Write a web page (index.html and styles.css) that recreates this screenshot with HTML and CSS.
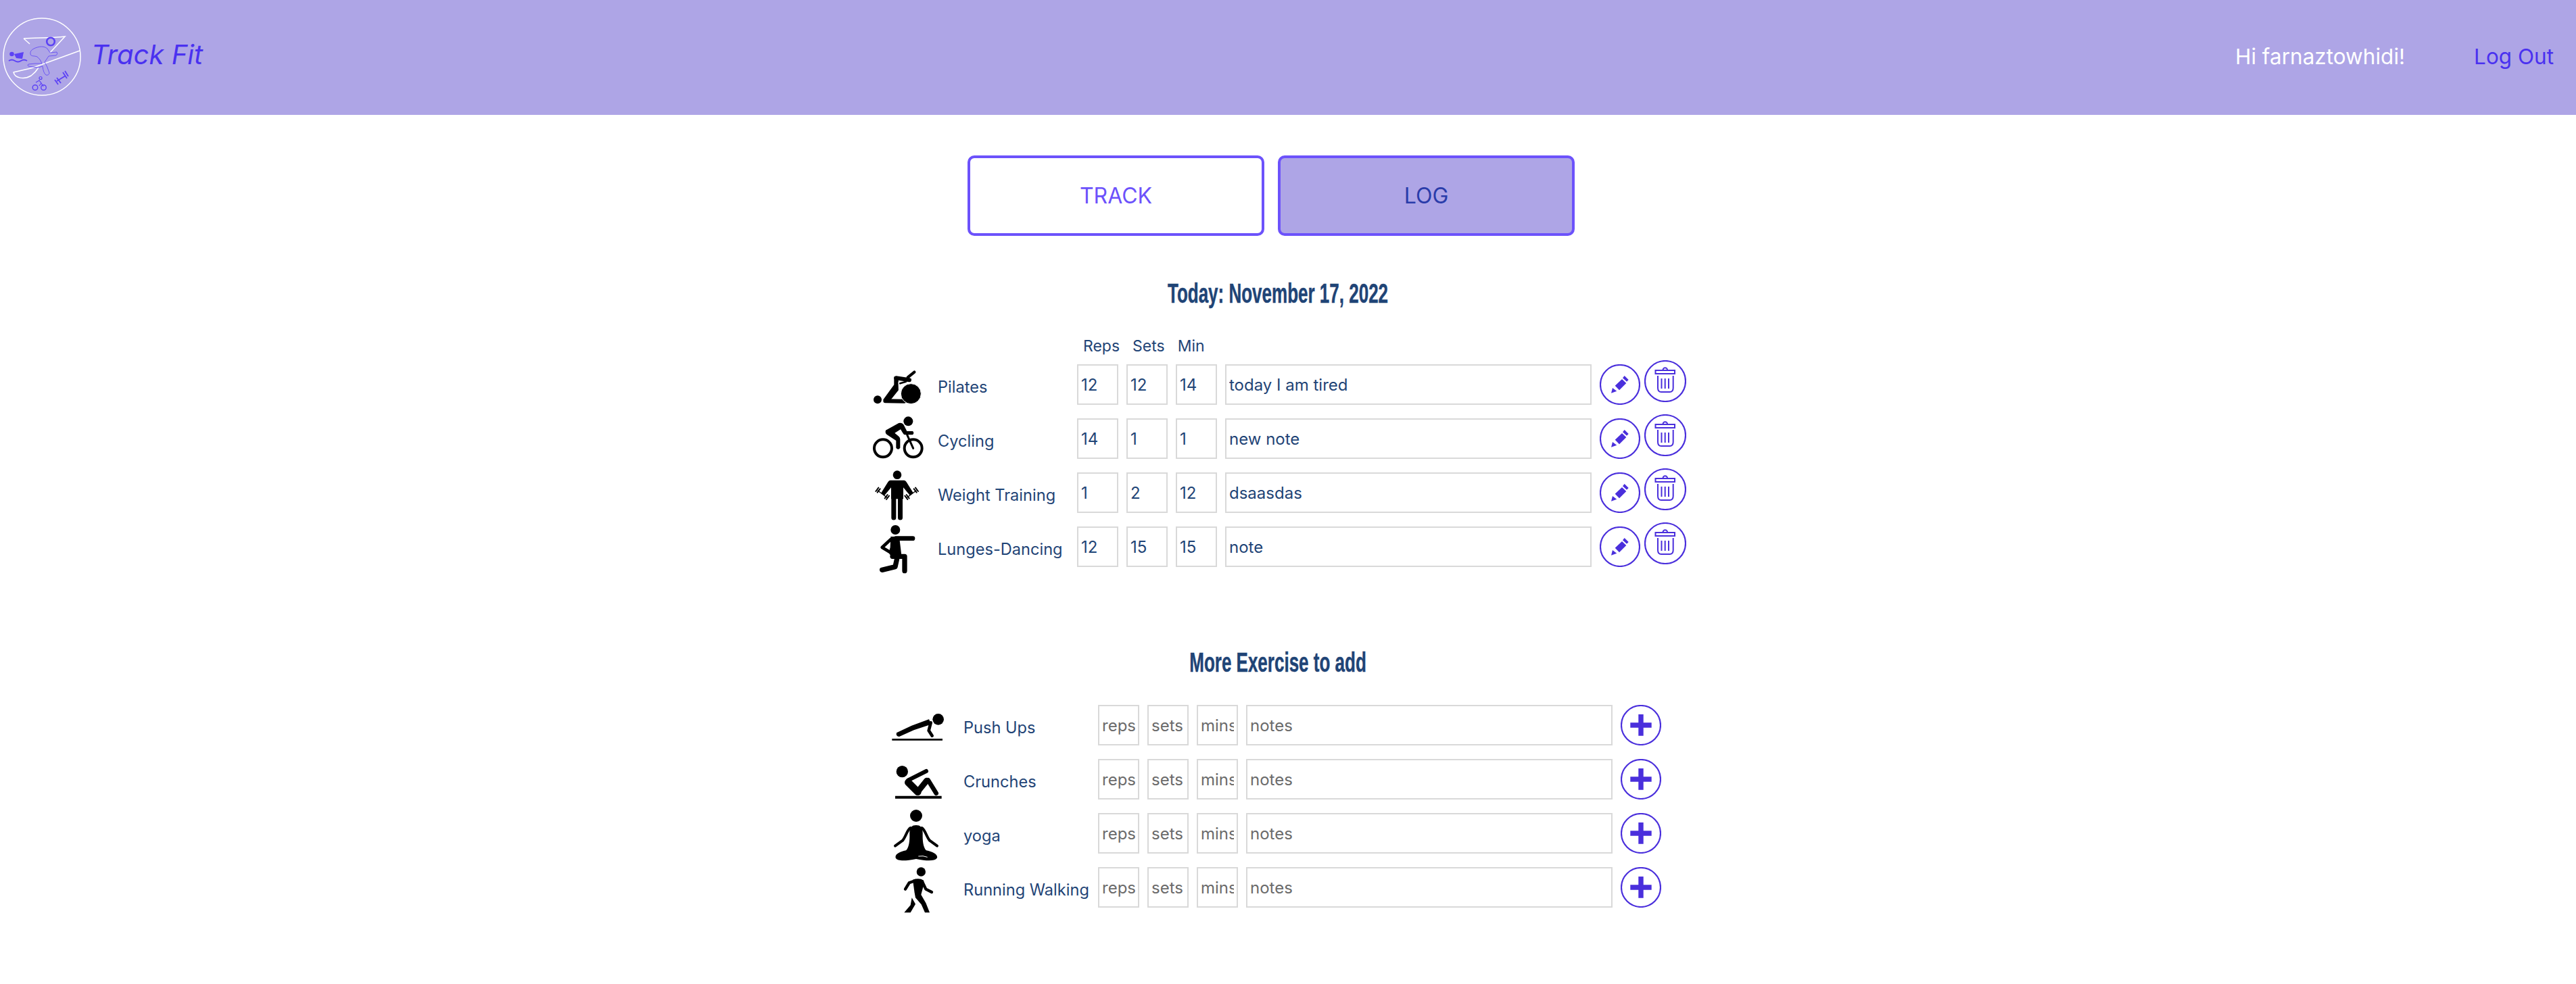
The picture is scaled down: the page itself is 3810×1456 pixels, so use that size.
FILE: index.html
```html
<!DOCTYPE html>
<html lang="en">
<head>
    <meta charset="UTF-8">
    <meta name="viewport" content="width=device-width, initial-scale=1.0">
    <title>Track Fit</title>
    <link rel="stylesheet" href="styles.css">
</head>
<body>
    <nav class="navbar">
        <div class="brand">
            <svg class="logo" viewBox="0 0 125 170">
                <circle cx="62" cy="84" r="57" fill="none" stroke="#fff" stroke-width="1.5"/>
                <path d="M35 57 C50 55 75 57 96 54 L74 78 M35 57 L44 65 M118 75 L52 99 C40 103 25 105 20 107 C22 116 36 118 46 112 C50 109 54 105 57 100" fill="none" stroke="#fff" stroke-width="1.5"/>
                <circle cx="75" cy="61.5" r="5.8" fill="none" stroke="#5c42f5" stroke-width="2.6"/>
                <path d="M50 72 C58 68 66 68 70 72 L74 78 L84 77 Q86 80 83 82 L72 83 L66 92 Q70 98 73 108 Q72 112 68 111 Q64 108 63 98 L56 100 L42 98 Q40 96 42 95 L52 94 L62 94 L59 88 L55 84 C50 82 46 84 45 80 Q44 75 50 72 Z" fill="none" stroke="#5c42f5" stroke-width="0.8"/>
                <circle cx="17.5" cy="80" r="3.3" fill="#5c42f5"/>
                <path d="M21 80 L35 77 L33 87 L24 86 Z" fill="#5c42f5"/>
                <path d="M13 90 q4.5 -3 9 0 t9 0 t9 0" fill="none" stroke="#5c42f5" stroke-width="1.9"/>
                <circle cx="52" cy="129.5" r="3.8" fill="none" stroke="#5c42f5" stroke-width="1.4"/>
                <circle cx="64.5" cy="129.5" r="3.8" fill="none" stroke="#5c42f5" stroke-width="1.4"/>
                <circle cx="60" cy="115.5" r="2" fill="none" stroke="#5c42f5" stroke-width="1.2"/>
                <path d="M53 122 L58 119 L61 123 L58 127 M61 123 L64 128" fill="none" stroke="#5c42f5" stroke-width="1.2"/>
                <path d="M84 120 L97 112 M81 118 L86 125 M84 115 L90 123 M93 107 L99 116 M96 105 L101 113" fill="none" stroke="#5c42f5" stroke-width="1.8"/>
            </svg>
            <span class="brand-name">Track Fit</span>
        </div>
        <div class="nav-links">
            <span class="greeting">Hi farnaztowhidi!</span>
            <a class="logout" href="#">Log Out</a>
        </div>
    </nav>

    <main>
        <div class="tabs">
            <button class="tab">TRACK</button>
            <button class="tab active">LOG</button>
        </div>

        <h2 class="title today">Today: November 17, 2022</h2>

        <div class="log-list">
            <div class="col-heads">
                <span>Reps</span>
                <span>Sets</span>
                <span>Min</span>
            </div>

            <div class="row">
                <svg class="ex-icon" viewBox="90 162 240 240">
                    <circle cx="114" cy="334" r="18"/>
                    <path class="limb" stroke-width="18" d="M148 340 L232 341"/>
                    <path d="M138 335 L187 268 L187 232 L206 240 L208 290 L172 335 Z"/>
                    <path class="limb" stroke-width="18" d="M196 238 L255 247"/>
                    <path class="limb" stroke-width="13" d="M248 235 L277 212"/>
                    <circle class="ball" cx="262" cy="308" r="45"/>
                    <path class="limb" stroke-width="8" d="M214 262 L240 254"/>
                    <path class="slit" d="M207 255 L208 292 M218 285 L240 262"/>
                </svg>
                <span class="name">Pilates</span>
                <input class="small" value="12">
                <input class="small" value="12">
                <input class="small" value="14">
                <input class="note" value="today I am tired">
                <button class="round-btn"><svg viewBox="0 0 60 60"><circle class="ring" cx="30" cy="30" r="29"/><path class="solid" d="M17 42.7 L19 35 L25.3 39.7 Z M22.7 31.7 L33 22 L39.3 28 L29 38.3 Z M34 20.3 L36.7 17 L42.7 23 L40 25.7 Z"/></svg></button>
                <button class="round-btn trash"><svg viewBox="0 0 62 62"><circle class="ring" cx="31" cy="31" r="30"/><path class="thin" d="M27.5 14.5 a3.3 3.3 0 0 1 6.6 0 M16.5 15 H45 V20 H16.5 Z M20 23 V41 Q20 47 25 47 H37.5 Q42.7 47 42.7 41 V23 M25.5 27 V42 M30.7 27 V42 M36 27 V42"/></svg></button>
            </div>

            <div class="row">
                <svg class="ex-icon" viewBox="90 402 240 240">
                    <circle cx="250" cy="430" r="21"/>
                    <circle class="wheel" cx="138" cy="550" r="39"/>
                    <circle class="wheel" cx="272" cy="550" r="39"/>
                    <path d="M150 470 L208 438 Q225 435 232 450 L244 474 H270 Q278 482 270 490 H236 Q230 490 226 482 L216 466 L190 482 L208 497 Q214 502 214 510 V548 Q205 560 196 548 V516 L156 490 Q146 482 150 470 Z"/>
                    <path class="limb" stroke-width="9" d="M245 490 L272 550"/>
                </svg>
                <span class="name">Cycling</span>
                <input class="small" value="14">
                <input class="small" value="1">
                <input class="small" value="1">
                <input class="note" value="new note">
                <button class="round-btn"><svg viewBox="0 0 60 60"><circle class="ring" cx="30" cy="30" r="29"/><path class="solid" d="M17 42.7 L19 35 L25.3 39.7 Z M22.7 31.7 L33 22 L39.3 28 L29 38.3 Z M34 20.3 L36.7 17 L42.7 23 L40 25.7 Z"/></svg></button>
                <button class="round-btn trash"><svg viewBox="0 0 62 62"><circle class="ring" cx="31" cy="31" r="30"/><path class="thin" d="M27.5 14.5 a3.3 3.3 0 0 1 6.6 0 M16.5 15 H45 V20 H16.5 Z M20 23 V41 Q20 47 25 47 H37.5 Q42.7 47 42.7 41 V23 M25.5 27 V42 M30.7 27 V42 M36 27 V42"/></svg></button>
            </div>

            <div class="row">
                <svg class="ex-icon" viewBox="90 642 240 240">
                    <circle cx="201" cy="668" r="19"/>
                    <path d="M170 692 H232 Q238 693 242 700 L272 748 L258 760 L228 724 V775 H174 V724 L144 760 L130 748 L160 700 Q164 693 170 692 Z"/>
                    <path class="limb" stroke-width="21" d="M185.500 765 V858 M214.500 765 V858"/>
                    <path class="limb" stroke-width="4" d="M115 738 L155 768 M285 738 L245 768"/>
                    <path class="limb" stroke-width="6" d="M106 741 L118 725 M113 746 L125 730 M146 772 L158 756 M153 777 L165 761 M294 741 L282 725 M287 746 L275 730 M254 772 L242 756 M247 777 L235 761"/>
                </svg>
                <span class="name">Weight Training</span>
                <input class="small" value="1">
                <input class="small" value="2">
                <input class="small" value="12">
                <input class="note" value="dsaasdas">
                <button class="round-btn"><svg viewBox="0 0 60 60"><circle class="ring" cx="30" cy="30" r="29"/><path class="solid" d="M17 42.7 L19 35 L25.3 39.7 Z M22.7 31.7 L33 22 L39.3 28 L29 38.3 Z M34 20.3 L36.7 17 L42.7 23 L40 25.7 Z"/></svg></button>
                <button class="round-btn trash"><svg viewBox="0 0 62 62"><circle class="ring" cx="31" cy="31" r="30"/><path class="thin" d="M27.5 14.5 a3.3 3.3 0 0 1 6.6 0 M16.5 15 H45 V20 H16.5 Z M20 23 V41 Q20 47 25 47 H37.5 Q42.7 47 42.7 41 V23 M25.5 27 V42 M30.7 27 V42 M36 27 V42"/></svg></button>
            </div>

            <div class="row">
                <svg class="ex-icon" viewBox="90 882 240 240">
                    <circle cx="193" cy="912" r="21"/>
                    <path class="limb" stroke-width="20" d="M195 950 H270"/>
                    <path d="M172 942 H210 L220 1025 H172 Q160 1020 170 990 Z"/>
                    <path class="limb" stroke-width="14" d="M172 955 L134 990 L175 1015"/>
                    <path class="limb" stroke-width="22" d="M180 1030 H234 V1094"/>
                    <path class="limb" stroke-width="22" d="M200 1040 L192 1076 L134 1090"/>
                </svg>
                <span class="name">Lunges-Dancing</span>
                <input class="small" value="12">
                <input class="small" value="15">
                <input class="small" value="15">
                <input class="note" value="note">
                <button class="round-btn"><svg viewBox="0 0 60 60"><circle class="ring" cx="30" cy="30" r="29"/><path class="solid" d="M17 42.7 L19 35 L25.3 39.7 Z M22.7 31.7 L33 22 L39.3 28 L29 38.3 Z M34 20.3 L36.7 17 L42.7 23 L40 25.7 Z"/></svg></button>
                <button class="round-btn trash"><svg viewBox="0 0 62 62"><circle class="ring" cx="31" cy="31" r="30"/><path class="thin" d="M27.5 14.5 a3.3 3.3 0 0 1 6.6 0 M16.5 15 H45 V20 H16.5 Z M20 23 V41 Q20 47 25 47 H37.5 Q42.7 47 42.7 41 V23 M25.5 27 V42 M30.7 27 V42 M36 27 V42"/></svg></button>
            </div>
        </div>

        <h2 class="title more">More Exercise to add</h2>

        <div class="add-list">
            <div class="row">
                <svg class="ex-icon" viewBox="120 51 240 240">
                    <circle cx="323" cy="130" r="25"/>
                    <path d="M138 190 L205 158 L282 130 L292 152 L215 178 L150 207 Q134 206 138 190 Z"/>
                    <path class="limb" stroke-width="14" d="M290 145 L281 180 L296 203"/>
                    <path class="ground" stroke-width="8" d="M118 220 H342"/>
                </svg>
                <span class="name">Push Ups</span>
                <input class="small" placeholder="reps">
                <input class="small" placeholder="sets">
                <input class="small" placeholder="mins">
                <input class="note" placeholder="notes">
                <button class="round-btn"><svg viewBox="0 0 60 60"><circle class="ring" cx="30" cy="30" r="29"/><path class="solid" d="M26.3 14 H33.7 V26.3 H45.7 V33.7 H33.7 V45.7 H26.3 V33.7 H14.3 V26.3 H26.3 Z"/></svg></button>
            </div>

            <div class="row">
                <svg class="ex-icon" viewBox="120 291 240 240">
                    <circle cx="163" cy="362" r="26"/>
                    <path class="limb" stroke-width="18" d="M190 400 L270 360"/>
                    <path class="limb" stroke-width="32" d="M190 410 L232 452"/>
                    <path class="limb" stroke-width="26" d="M232 452 L272 402"/>
                    <path class="limb" stroke-width="20" d="M278 400 L314 458"/>
                    <path class="ground" stroke-width="12" d="M132 476 H338"/>
                </svg>
                <span class="name">Crunches</span>
                <input class="small" placeholder="reps">
                <input class="small" placeholder="sets">
                <input class="small" placeholder="mins">
                <input class="note" placeholder="notes">
                <button class="round-btn"><svg viewBox="0 0 60 60"><circle class="ring" cx="30" cy="30" r="29"/><path class="solid" d="M26.3 14 H33.7 V26.3 H45.7 V33.7 H33.7 V45.7 H26.3 V33.7 H14.3 V26.3 H26.3 Z"/></svg></button>
            </div>

            <div class="row">
                <svg class="ex-icon" viewBox="120 531 240 240">
                    <circle cx="225" cy="558" r="27"/>
                    <path d="M225 600 C205 600 195 610 196 640 C197 675 192 700 180 712 C150 718 130 730 134 745 C140 760 175 760 225 750 C275 760 310 760 318 745 C322 730 300 718 270 712 C258 700 253 675 254 640 C255 610 245 600 225 600 Z"/>
                    <path class="limb" stroke-width="12" d="M200 612 C185 620 180 650 165 668 L132 692 M250 612 C265 620 270 650 285 668 L318 692"/>
                    <path class="slit" d="M235 738 Q255 734 275 742"/>
                </svg>
                <span class="name">yoga</span>
                <input class="small" placeholder="reps">
                <input class="small" placeholder="sets">
                <input class="small" placeholder="mins">
                <input class="note" placeholder="notes">
                <button class="round-btn"><svg viewBox="0 0 60 60"><circle class="ring" cx="30" cy="30" r="29"/><path class="solid" d="M26.3 14 H33.7 V26.3 H45.7 V33.7 H33.7 V45.7 H26.3 V33.7 H14.3 V26.3 H26.3 Z"/></svg></button>
            </div>

            <div class="row">
                <svg class="ex-icon" viewBox="120 771 240 240">
                    <circle cx="247" cy="807" r="20"/>
                    <path d="M210 842 Q240 832 258 845 L260 860 L245 915 L218 900 Z"/>
                    <path class="limb" stroke-width="13" d="M222 846 L194 856 L177 884 M252 850 L268 884 L294 897"/>
                    <path d="M218 900 L245 905 L268 945 L285 988 H264 L248 952 L222 922 Z"/>
                    <path d="M206 922 L222 950 L200 988 H172 L200 955 Z"/>
                </svg>
                <span class="name">Running Walking</span>
                <input class="small" placeholder="reps">
                <input class="small" placeholder="sets">
                <input class="small" placeholder="mins">
                <input class="note" placeholder="notes">
                <button class="round-btn"><svg viewBox="0 0 60 60"><circle class="ring" cx="30" cy="30" r="29"/><path class="solid" d="M26.3 14 H33.7 V26.3 H45.7 V33.7 H33.7 V45.7 H26.3 V33.7 H14.3 V26.3 H26.3 Z"/></svg></button>
            </div>
        </div>
    </main>
</body>
</html>
```

FILE: styles.css
```css
* {
    box-sizing: border-box;
}
body {
    margin: 0;
    background: white;
    font-family: Inter, "Noto Sans", sans-serif;
    color: #1f4476;
}
.navbar {
    height: 170px;
    background: #aea5e6;
    display: flex;
    justify-content: space-between;
    align-items: center;
    padding-right: 33px;
}
.brand {
    display: flex;
    align-items: center;
}
.logo {
    width: 125px;
    height: 170px;
    flex-shrink: 0;
}
.brand-name {
    margin-left: 10px;
    padding-bottom: 10px;
    font-size: 40px;
    font-style: italic;
    color: #4a31f0;
}
.nav-links {
    display: flex;
    align-items: center;
    gap: 102px;
    padding-bottom: 3px;
    font-size: 31.5px;
}
.greeting {
    color: white;
}
.logout {
    color: #4a31f0;
    text-decoration: none;
}
.tabs {
    display: flex;
    justify-content: center;
    gap: 20px;
    margin-top: 60px;
    padding-right: 50px;
}
.tab {
    width: 439px;
    height: 119px;
    border: 4px solid #6c52fb;
    border-radius: 10px;
    background: white;
    color: #6c52fb;
    font-family: inherit;
    font-size: 32px;
    cursor: pointer;
}
.tab.active {
    background: #aea5e6;
    color: #2a3caa;
}
.title {
    margin: 0 30px 0 0;
    text-align: center;
    font-family: "Liberation Sans", sans-serif;
    font-size: 40px;
    font-weight: bold;
    line-height: 44px;
    color: #1f4476;
    transform: scaleX(0.65);
    -webkit-text-stroke: 0.5px #1f4476;
}
.today {
    margin-top: 63px;
}
.more {
    margin-top: 119px;
}
.log-list {
    width: 1230px;
    margin: 43px auto 0;
}
.add-list {
    width: 1170px;
    margin: 41px auto 0;
}
.col-heads {
    display: flex;
    gap: 19px;
    padding-left: 312px;
    height: 40px;
    font-size: 23px;
    line-height: 26px;
}
.row {
    display: flex;
    align-items: flex-start;
    gap: 12px;
    height: 60px;
    margin-bottom: 20px;
}
.ex-icon {
    width: 80px;
    height: 80px;
    margin-top: -5px;
    margin-right: 5px;
    flex-shrink: 0;
    overflow: visible;
}
.add-list .ex-icon {
    margin-right: 13px;
}
.limb {
    fill: none;
    stroke: black;
    stroke-linecap: round;
    stroke-linejoin: round;
}
.ground {
    fill: none;
    stroke: black;
}
.slit {
    fill: none;
    stroke: white;
    stroke-width: 3;
}
.ball {
    fill: black;
    stroke: white;
    stroke-width: 3;
}
.wheel {
    fill: none;
    stroke: black;
    stroke-width: 12;
}
.name {
    width: 194px;
    flex-shrink: 0;
    font-size: 23.6px;
    line-height: 60px;
    margin-top: 4px;
    white-space: nowrap;
}
.add-list .name {
    width: 187px;
}
input {
    height: 60px;
    padding: 0 4px;
    border: 2px solid #d9d9d9;
    font-family: inherit;
    font-size: 24px;
    color: #1f4476;
    background: white;
}
input::placeholder {
    color: #6b6b6b;
}
.small {
    width: 61px;
}
.note {
    width: 542px;
}
.round-btn {
    width: 60px;
    height: 60px;
    padding: 0;
    border: none;
    background: none;
    cursor: pointer;
    flex-shrink: 0;
}
.round-btn svg {
    display: block;
    width: 100%;
    height: 100%;
}
.trash {
    width: 62px;
    height: 62px;
    margin-top: -6px;
    margin-left: -6px;
}
.ring {
    fill: white;
    stroke: #4a2fdc;
    stroke-width: 2.2;
}
.solid {
    fill: #4a2fdc;
}
.thin {
    fill: none;
    stroke: #4a2fdc;
    stroke-width: 2;
}
```
